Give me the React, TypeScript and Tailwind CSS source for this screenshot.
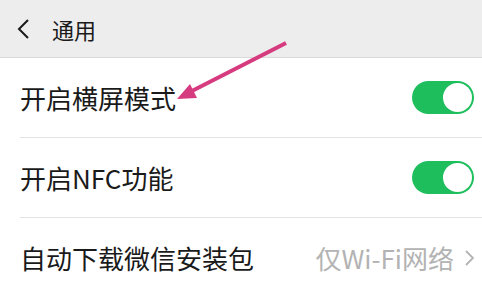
import React from "react";

const font = { fontFamily: '"Noto Sans CJK SC", "Noto Sans", sans-serif' };

function Toggle() {
  return (
    <div className="flex h-[33px] w-[62px] items-center justify-end rounded-full bg-[#1fbe5d] p-[2px]">
      <div className="h-[29px] w-[29px] rounded-full bg-white" />
    </div>
  );
}

function Row({ label, right, last }: { label: string; right: React.ReactNode; last?: boolean }) {
  return (
    <div className="pl-5">
      <div
        className={
          "flex h-[80px] items-center justify-between pr-[8px] " +
          (last ? "" : "border-b border-[#e3e3e3]")
        }
      >
        <span className="text-[26px] leading-none text-[#1a1a1a]">{label}</span>
        {right}
      </div>
    </div>
  );
}

export default function App() {
  return (
    <div className="relative h-[286px] w-[482px] overflow-hidden bg-white" style={font}>
      <div className="flex h-[58px] items-center border-b border-[#dadada] bg-[#ededed]">
        <svg width="14" height="22" viewBox="0 0 14 22" className="ml-[16px]">
          <polyline points="12,2 3,11 12,20" fill="none" stroke="#1a1a1a" strokeWidth="2" />
        </svg>
        <span className="ml-[22px] text-[22px] leading-none text-[#1a1a1a]">通用</span>
      </div>
      <Row label="开启横屏模式" right={<Toggle />} />
      <Row label="开启NFC功能" right={<Toggle />} />
      <Row
        label="自动下载微信安装包"
        last
        right={
          <div className="flex items-center gap-[10px]">
            <span className="text-[26px] leading-none text-[#b3b3b3]">仅Wi-Fi网络</span>
            <svg width="10" height="18" viewBox="0 0 10 18">
              <polyline points="2,2 9,9 2,16" fill="none" stroke="#b3b3b3" strokeWidth="1.8" />
            </svg>
          </div>
        }
      />
      <svg className="pointer-events-none absolute left-0 top-0" width="482" height="286">
        <line x1="286" y1="43" x2="188" y2="93" stroke="#d63b80" strokeWidth="4" />
        <polygon points="177,99 190,84 197,98" fill="#d63b80" />
      </svg>
    </div>
  );
}
